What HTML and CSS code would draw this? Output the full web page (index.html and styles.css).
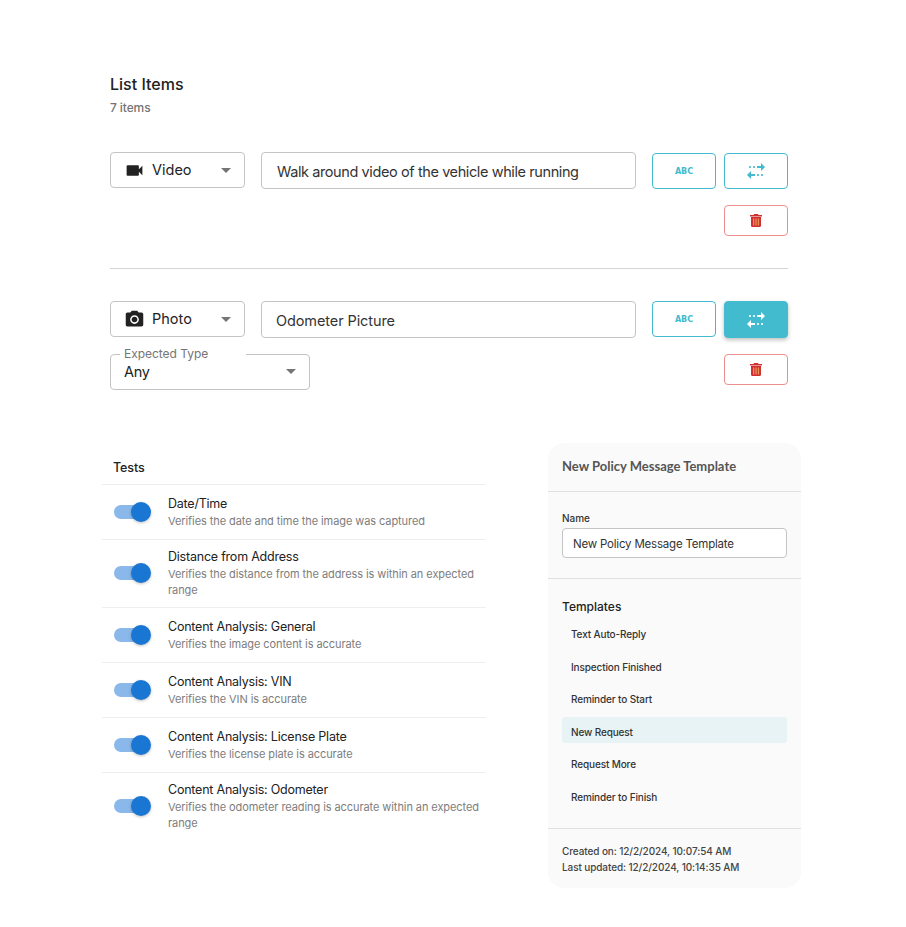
FILE: index.html
```html
<!DOCTYPE html>
<html lang="en">
<head>
   <meta charset="UTF-8">
   <meta name="viewport" content="width=device-width, initial-scale=1.0">
   <title>List Items</title>
   <link rel="stylesheet" href="styles.css">
</head>
<body>
   <div class="page">
       <section class="list-items">
           <h1 class="list-title">List Items</h1>
           <div class="list-count">7 items</div>

           <div class="item-row">
               <div class="type-select">
                   <svg class="type-icon" viewBox="0 0 24 24"><path d="M17 10.5V7c0-.55-.45-1-1-1H4c-.55 0-1 .45-1 1v10c0 .55.45 1 1 1h12c.55 0 1-.45 1-1v-3.5l4 4v-11l-4 4z"/></svg>
                   <span class="type-label">Video</span>
                   <span class="caret"></span>
               </div>
               <input class="item-input long" type="text" value="Walk around video of the vehicle while running">
               <button class="outline-btn"><span class="abc-icon">ABC</span></button>
               <button class="outline-btn">
                   <svg class="btn-icon" viewBox="0 0 24 24"><path d="M17 4l4 4-4 4V9h-4V7h4V4zm-7 3c-.55 0-1 .45-1 1s.45 1 1 1 1-.45 1-1-.45-1-1-1zM6 7c-.55 0-1 .45-1 1s.45 1 1 1 1-.45 1-1-.45-1-1-1zm1 10h4v-2H7v-3l-4 4 4 4v-3zm7 0c.55 0 1-.45 1-1s-.45-1-1-1-1 .45-1 1 .45 1 1 1zm4 0c.55 0 1-.45 1-1s-.45-1-1-1-1 .45-1 1 .45 1 1 1z"/></svg>
               </button>
               <div class="row-spacer"></div>
               <button class="delete-btn">
                   <svg class="trash-icon" viewBox="0 0 12 13"><path class="trash-red" d="M4 0h4l.5 1H12v1.5H0V1h3.5zM1 3h10v8.8c0 .7-.5 1.2-1.2 1.2H2.200c-.7 0-1.200-.5-1.200-1.200z"/><path class="trash-stripes" d="M3 4.500h1.300V11.500H3zM5.400 4.500h1.300V11.500H5.400zM7.800 4.500h1.300V11.500H7.800z"/></svg>
               </button>
           </div>

           <hr class="divider">

           <div class="item-row second">
               <div class="type-select">
                   <svg class="type-icon" viewBox="0 0 24 24"><circle cx="12" cy="12" r="3.200"/><path d="M9 2 7.170 4H4c-1.100 0-2 .9-2 2v12c0 1.100.9 2 2 2h16c1.100 0 2-.9 2-2V6c0-1.100-.9-2-2-2h-3.170L15 2H9zm3 15c-2.760 0-5-2.240-5-5s2.240-5 5-5 5 2.240 5 5-2.240 5-5 5z"/></svg>
                   <span class="type-label">Photo</span>
                   <span class="caret"></span>
               </div>
               <input class="item-input" type="text" value="Odometer Picture">
               <button class="outline-btn"><span class="abc-icon">ABC</span></button>
               <button class="outline-btn active">
                   <svg class="btn-icon" viewBox="0 0 24 24"><path d="M17 4l4 4-4 4V9h-4V7h4V4zm-7 3c-.55 0-1 .45-1 1s.45 1 1 1 1-.45 1-1-.45-1-1-1zM6 7c-.55 0-1 .45-1 1s.45 1 1 1 1-.45 1-1-.45-1-1-1zm1 10h4v-2H7v-3l-4 4 4 4v-3zm7 0c.55 0 1-.45 1-1s-.45-1-1-1-1 .45-1 1 .45 1 1 1zm4 0c.55 0 1-.45 1-1s-.45-1-1-1-1 .45-1 1 .45 1 1 1z"/></svg>
               </button>
               <fieldset class="expected-select">
                   <legend>Expected Type</legend>
                   <span class="expected-value">Any</span>
                   <span class="caret"></span>
               </fieldset>
               <button class="delete-btn">
                   <svg class="trash-icon" viewBox="0 0 12 13"><path class="trash-red" d="M4 0h4l.5 1H12v1.5H0V1h3.5zM1 3h10v8.8c0 .7-.5 1.2-1.2 1.2H2.200c-.7 0-1.200-.5-1.200-1.200z"/><path class="trash-stripes" d="M3 4.500h1.300V11.500H3zM5.400 4.500h1.300V11.500H5.400zM7.800 4.500h1.300V11.500H7.800z"/></svg>
               </button>
           </div>
       </section>

       <div class="bottom">
           <section class="tests">
               <div class="tests-title">Tests</div>

               <div class="test-row">
                   <span class="switch"><span class="switch-knob"></span></span>
                   <div class="test-text">
                       <div class="test-name">Date/Time</div>
                       <div class="test-desc">Verifies the date and time the image was captured</div>
                   </div>
               </div>
               <div class="test-row">
                   <span class="switch"><span class="switch-knob"></span></span>
                   <div class="test-text">
                       <div class="test-name">Distance from Address</div>
                       <div class="test-desc">Verifies the distance from the address is within an expected range</div>
                   </div>
               </div>
               <div class="test-row">
                   <span class="switch"><span class="switch-knob"></span></span>
                   <div class="test-text">
                       <div class="test-name">Content Analysis: General</div>
                       <div class="test-desc">Verifies the image content is accurate</div>
                   </div>
               </div>
               <div class="test-row">
                   <span class="switch"><span class="switch-knob"></span></span>
                   <div class="test-text">
                       <div class="test-name">Content Analysis: VIN</div>
                       <div class="test-desc">Verifies the VIN is accurate</div>
                   </div>
               </div>
               <div class="test-row">
                   <span class="switch"><span class="switch-knob"></span></span>
                   <div class="test-text">
                       <div class="test-name">Content Analysis: License Plate</div>
                       <div class="test-desc">Verifies the license plate is accurate</div>
                   </div>
               </div>
               <div class="test-row last">
                   <span class="switch"><span class="switch-knob"></span></span>
                   <div class="test-text">
                       <div class="test-name">Content Analysis: Odometer</div>
                       <div class="test-desc">Verifies the odometer reading is accurate within an expected range</div>
                   </div>
               </div>
           </section>

           <aside class="template-panel">
               <div class="panel-head">New Policy Message Template</div>
               <div class="panel-name">
                   <label class="name-label">Name</label>
                   <input class="name-input" type="text" value="New Policy Message Template">
               </div>
               <div class="panel-templates">
                   <div class="templates-title">Templates</div>
                   <div class="template-item">Text Auto-Reply</div>
                   <div class="template-item">Inspection Finished</div>
                   <div class="template-item">Reminder to Start</div>
                   <div class="template-item selected">New Request</div>
                   <div class="template-item">Request More</div>
                   <div class="template-item">Reminder to Finish</div>
               </div>
               <div class="panel-foot">
                   <div>Created on: 12/2/2024, 10:07:54 AM</div>
                   <div>Last updated: 12/2/2024, 10:14:35 AM</div>
               </div>
           </aside>
       </div>
   </div>
</body>
</html>
```

FILE: styles.css
```css
* {
    margin: 0;
    padding: 0;
    box-sizing: border-box;
}

body {
    font-family: Inter, 'Noto Sans', sans-serif;
    background-color: white;
    color: #222;
}

.page {
    padding: 75px 0 0 102px;
}

.list-items {
    width: 686px;
    padding-left: 8px;
}

.list-title {
    font-size: 16px;
    font-weight: 500;
    line-height: 19px;
}

.list-count {
    margin-top: 6px;
    font-size: 12px;
    font-weight: 500;
    line-height: 16px;
    letter-spacing: -0.1px;
    color: #757575;
}

.item-row {
    display: grid;
    grid-template-columns: 135px 375px 64px 64px;
    column-gap: 16px;
    row-gap: 16px;
    align-items: start;
    margin-top: 36px;
}

.item-row.second {
    margin-top: 32px;
}

.item-row.second .outline-btn {
    margin-top: 0;
}

.item-row > .outline-btn:nth-of-type(2) {
    margin-left: -8px;
    width: 64px;
}

.type-select {
    display: flex;
    align-items: center;
    height: 36px;
    padding: 0 13px 0 12.500px;
    border: 1px solid #c4c4c4;
    border-radius: 4px;
}

.type-icon {
    width: 21px;
    height: 21px;
    fill: #222;
    flex-shrink: 0;
}

.type-label {
    margin-left: 7.500px;
    font-size: 14.500px;
    line-height: 20px;
    flex: 1;
}

.caret {
    width: 0;
    height: 0;
    border-left: 5px solid transparent;
    border-right: 5px solid transparent;
    border-top: 5px solid #757575;
}

.item-input {
    width: 375px;
    height: 37px;
    padding: 2px 14px 0;
    border: 1px solid #c4c4c4;
    border-radius: 4px;
    font-family: inherit;
    font-size: 14.500px;
    letter-spacing: -0.1px;
    color: #333;
}

.item-input.long {
    padding-left: 15px;
    letter-spacing: -0.4px;
}

.outline-btn {
    display: flex;
    align-items: center;
    justify-content: center;
    height: 36px;
    margin-top: 1px;
    background: white;
    border: 1px solid #42bbce;
    border-radius: 4px;
    color: #42bbce;
}

.outline-btn.active {
    background-color: #42bbce;
    color: white;
    box-shadow: 0 2px 4px rgba(0,0,0,0.25);
    height: 37px;
}

.abc-icon {
    font-family: 'DejaVu Sans', sans-serif;
    font-size: 8px;
    font-weight: 700;
}

.btn-icon {
    width: 24px;
    height: 24px;
    fill: currentColor;
}

.row-spacer {
    grid-column: 1 / 4;
}

.delete-btn {
    display: flex;
    align-items: center;
    justify-content: center;
    grid-column: 4;
    width: 64px;
    height: 31px;
    margin-left: -8px;
    background: white;
    border: 1px solid #ec8f8f;
    border-radius: 4px;
}

.trash-icon {
    width: 12px;
    height: 13px;
}

.trash-red {
    fill: #d32f2f;
}

.trash-stripes {
    fill: #e8925a;
}

.divider {
    width: 678px;
    margin-top: 32px;
    border: none;
    border-top: 1px solid #d4d4d4;
}

.expected-select {
    grid-column: 1 / 3;
    display: flex;
    align-items: center;
    justify-content: space-between;
    width: 200px;
    height: 42px;
    margin-top: -6px;
    padding: 0 13px 6px;
    border: 1px solid #c4c4c4;
    border-radius: 4px;
}

.expected-select legend {
    margin-left: -4px;
    padding: 0 38px 0 4px;
    font-size: 12px;
    line-height: 12px;
    letter-spacing: -0.03px;
    color: #757575;
}

.expected-value {
    font-size: 14.500px;
    line-height: 20px;
    letter-spacing: -0.3px;
}

.bottom {
    display: flex;
    align-items: flex-start;
    margin-top: 53px;
}

.tests {
    width: 384px;
    margin-top: 16px;
}

.tests-title {
    padding-left: 11px;
    padding-bottom: 7px;
    font-size: 12.500px;
    font-weight: 500;
    line-height: 18px;
    letter-spacing: -0.1px;
    border-bottom: 1px solid #eee;
}

.test-row {
    display: flex;
    align-items: center;
    min-height: 55px;
    padding: 8px 0 9px 12px;
    border-bottom: 1px solid #eee;
}

.test-row.last {
    border-bottom: none;
}

.switch {
    position: relative;
    display: block;
    width: 36px;
    height: 14px;
    flex-shrink: 0;
    background-color: #8ab8ea;
    border-radius: 7px;
}

.switch-knob {
    position: absolute;
    top: -3px;
    right: -1px;
    width: 20px;
    height: 20px;
    background-color: #1976d2;
    border-radius: 50%;
    box-shadow: 0 1px 3px rgba(0,0,0,0.25);
}

.test-text {
    margin-left: 18px;
}

.test-name {
    font-size: 12.500px;
    line-height: 18px;
    letter-spacing: -0.22px;
    color: #222;
}

.test-desc {
    font-size: 11px;
    line-height: 16px;
    letter-spacing: -0.08px;
    color: #7d7d7d;
}

.template-panel {
    width: 253px;
    margin-left: 62px;
    background-color: #fafafa;
    border-radius: 16px;
}

.panel-head {
    height: 49px;
    padding: 15px 14px 16px;
    font-family: Lato, sans-serif;
    font-size: 13px;
    font-weight: 700;
    line-height: 17px;
    color: #555;
    border-bottom: 1px solid #e0e0e0;
}

.panel-name {
    height: 87px;
    padding: 19px 14px 0;
    border-bottom: 1px solid #e0e0e0;
}

.name-label {
    display: block;
    font-size: 10px;
    font-weight: 500;
    line-height: 14px;
    color: #333;
}

.name-input {
    display: block;
    width: 225px;
    height: 30px;
    margin-top: 3px;
    padding: 2px 10px 0;
    border: 1px solid #c4c4c4;
    border-radius: 4px;
    font-family: inherit;
    font-size: 11.500px;
    letter-spacing: -0.2px;
    color: #333;
}

.panel-templates {
    height: 250px;
    padding: 19px 14px 15px;
    border-bottom: 1px solid #e0e0e0;
}

.templates-title {
    margin-bottom: 4.500px;
    font-size: 12px;
    font-weight: 500;
    line-height: 17px;
}

.template-item {
    display: flex;
    align-items: center;
    height: 26px;
    margin-bottom: 6.500px;
    padding: 3px 0 0 9px;
    font-size: 10px;
    font-weight: 500;
    letter-spacing: -0.13px;
    color: #333;
    border-radius: 3px;
}

.template-item.selected {
    background-color: #e8f3f6;
}

.panel-foot {
    padding: 14px 14px 13px;
    font-size: 10px;
    font-weight: 500;
    line-height: 16px;
    letter-spacing: -0.1px;
    color: #444;
}
```
